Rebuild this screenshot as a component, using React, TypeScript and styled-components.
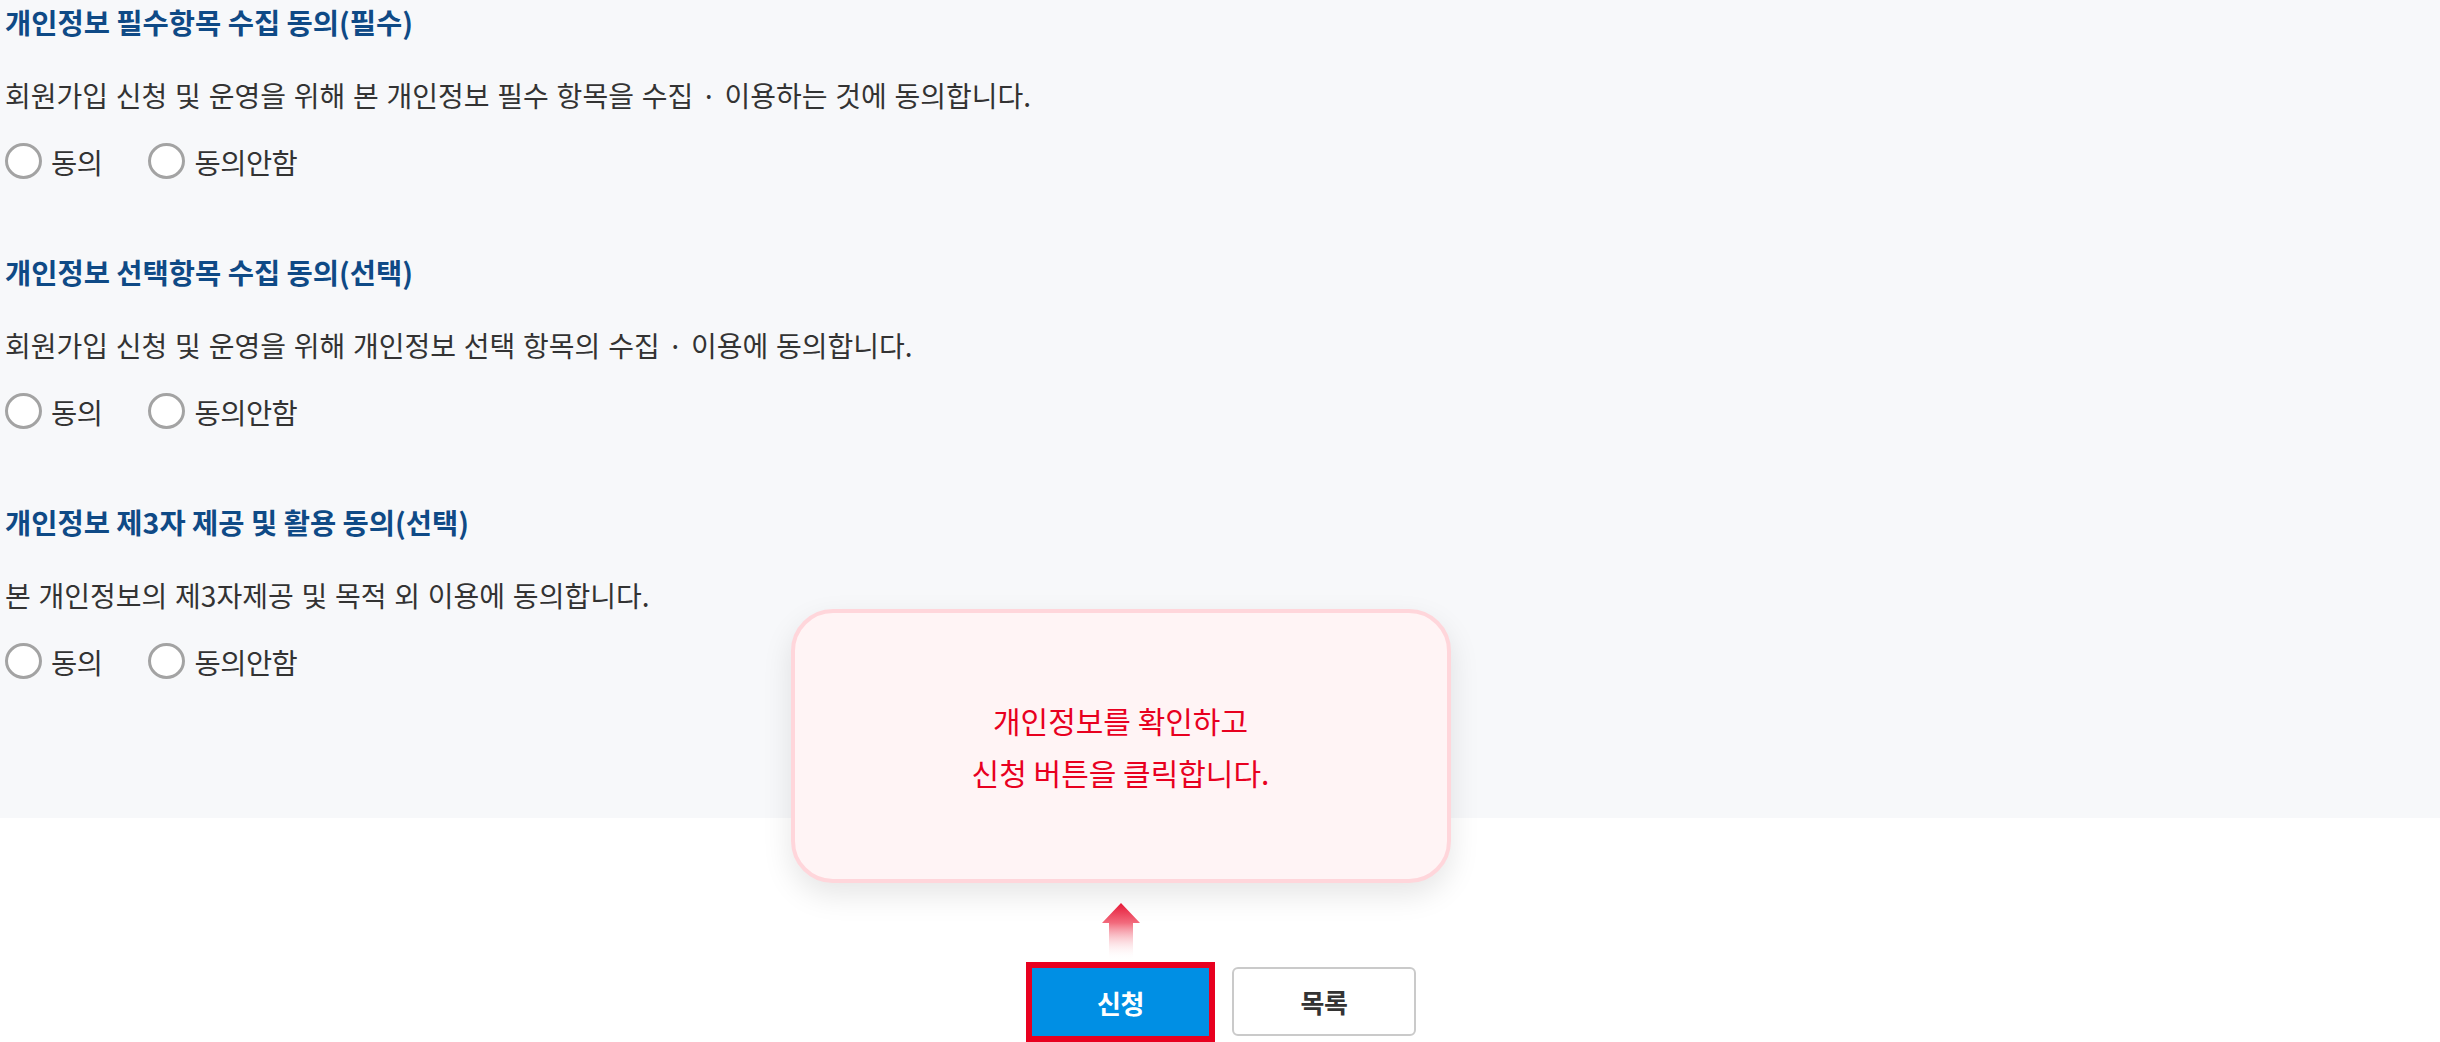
import React from "react";
import styled, { createGlobalStyle } from "styled-components";

const GlobalStyle = createGlobalStyle`
  html, body {
    margin: 0;
    padding: 0;
    background: #ffffff;
  }
  body {
    font-family: "Noto Sans CJK KR", "Noto Sans", sans-serif;
    color: #333333;
  }
  * { box-sizing: border-box; }
`;

const Page = styled.div`
  width: 2440px;
  height: 1042px;
  overflow: hidden;
  display: flex;
  flex-direction: column;
`;

const Panel = styled.div`
  background: #f7f8fa;
  height: 818px;
  padding: 0 0 0 5px;
  display: flex;
  flex-direction: column;
  gap: 67px;
`;

const Section = styled.section`
  display: flex;
  flex-direction: column;
`;

const Title = styled.h3`
  margin: 0;
  font-size: 28.5px;
  font-weight: 700;
  line-height: 44px;
  letter-spacing: 0;
  color: #0f4a86;
`;

const Desc = styled.p`
  margin: 29px 0 0;
  font-size: 28px;
  line-height: 44px;
  letter-spacing: 0;
  word-spacing: 1.5px;
  color: #333333;
`;

const RadioRow = styled.div`
  margin-top: 22px;
  height: 44px;
  display: flex;
  align-items: center;
  gap: 46px;
`;

const RadioLabel = styled.label`
  display: flex;
  align-items: center;
  gap: 9px;
  font-size: 28.5px;
  letter-spacing: -0.5px;
  color: #333333;
  cursor: pointer;
`;

const RadioInput = styled.input`
  appearance: none;
  margin: 0;
  width: 37px;
  height: 36px;
  border-radius: 50%;
  border: 3px solid #a3a3a3;
  background: #ffffff;
`;

const Bottom = styled.div`
  flex: 1;
  display: flex;
  justify-content: center;
  align-items: flex-start;
  gap: 23px;
  padding: 150px 0 0 8px;
`;

const GuideWrap = styled.div`
  position: relative;
`;

const PrimaryButton = styled.button`
  width: 177px;
  height: 68px;
  border: none;
  background: #008fe4;
  color: #ffffff;
  font-family: inherit;
  font-size: 26px;
  font-weight: 700;
  letter-spacing: -0.5px;
  outline: 6px solid #e8001f;
  cursor: pointer;
`;

const SecondaryButton = styled.button`
  width: 184px;
  height: 69px;
  margin-top: -1px;
  border: 2px solid #cacaca;
  border-radius: 6px;
  background: #ffffff;
  color: #333333;
  font-family: inherit;
  font-size: 26px;
  font-weight: 700;
  letter-spacing: -0.5px;
  cursor: pointer;
`;

const Tooltip = styled.div`
  position: absolute;
  left: 50%;
  bottom: calc(100% + 85px);
  transform: translateX(-50%);
  width: 660px;
  height: 274px;
  border: 4px solid #ffd6db;
  border-radius: 42px;
  background: #fff4f5;
  box-shadow: 0 12px 30px rgba(0, 0, 0, 0.1);
  display: flex;
  align-items: center;
  justify-content: center;
  text-align: center;
  color: #e8001f;
  font-size: 30px;
  line-height: 52px;
  white-space: nowrap;
`;

const Arrow = styled.svg`
  position: absolute;
  left: 50%;
  bottom: calc(100% + 8px);
  transform: translateX(-50%);
  display: block;
`;

const sections = [
  {
    title: "개인정보 필수항목 수집 동의(필수)",
    desc: "회원가입 신청 및 운영을 위해 본 개인정보 필수 항목을 수집 · 이용하는 것에 동의합니다.",
  },
  {
    title: "개인정보 선택항목 수집 동의(선택)",
    desc: "회원가입 신청 및 운영을 위해 개인정보 선택 항목의 수집 · 이용에 동의합니다.",
  },
  {
    title: "개인정보 제3자 제공 및 활용 동의(선택)",
    desc: "본 개인정보의 제3자제공 및 목적 외 이용에 동의합니다.",
  },
];

export default function App() {
  return (
    <>
      <GlobalStyle />
      <Page>
        <Panel>
          {sections.map((s, i) => (
            <Section key={i}>
              <Title>{s.title}</Title>
              <Desc>{s.desc}</Desc>
              <RadioRow>
                <RadioLabel>
                  <RadioInput type="radio" name={`agree${i}`} />
                  동의
                </RadioLabel>
                <RadioLabel>
                  <RadioInput type="radio" name={`agree${i}`} />
                  동의안함
                </RadioLabel>
              </RadioRow>
            </Section>
          ))}
        </Panel>
        <Bottom>
          <GuideWrap>
            <Tooltip>
              개인정보를 확인하고
              <br />
              신청 버튼을 클릭합니다.
            </Tooltip>
            <Arrow width="38" height="57" viewBox="0 0 38 57">
              <defs>
                <linearGradient id="arrowGrad" x1="0" y1="0" x2="0" y2="1">
                  <stop offset="0" stopColor="#e61937" />
                  <stop offset="0.35" stopColor="#f26b7d" />
                  <stop offset="1" stopColor="#ffffff" stopOpacity="0" />
                </linearGradient>
              </defs>
              <polygon
                points="19,0 38,20 31,20 31,57 7,57 7,20 0,20"
                fill="url(#arrowGrad)"
              />
            </Arrow>
            <PrimaryButton type="button">신청</PrimaryButton>
          </GuideWrap>
          <SecondaryButton type="button">목록</SecondaryButton>
        </Bottom>
      </Page>
    </>
  );
}
